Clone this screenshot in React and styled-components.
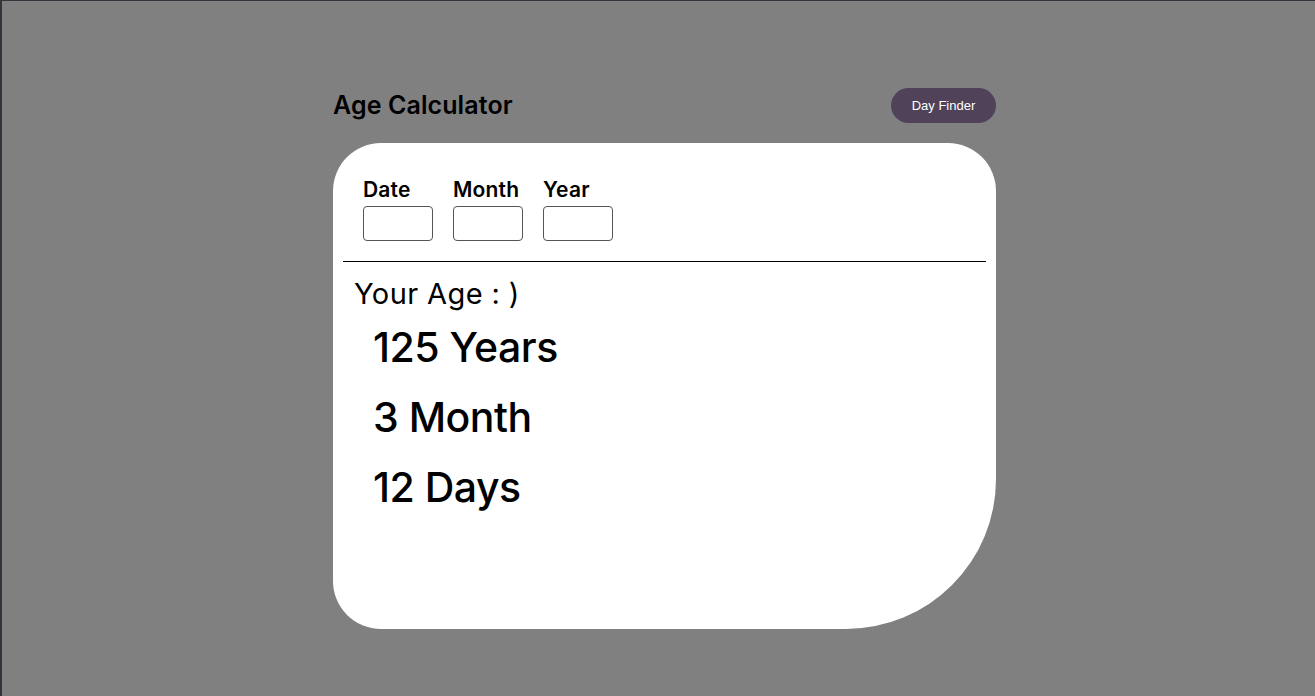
import React from 'react';
import styled, { createGlobalStyle } from 'styled-components';

const GlobalStyle = createGlobalStyle`
  html, body {
    margin: 0;
    padding: 0;
  }
  body {
    background-color: #808080;
    border-left: 2px solid #35333b;
    border-top: 1px solid #35333b;
    min-height: 695px;
    font-family: "Inter", "Open Sans", sans-serif;
  }
`;

const Page = styled.div`
  display: flex;
  flex-direction: column;
  width: 663px;
  margin-left: 331px;
  padding-top: 86px;
`;

const Header = styled.div`
  display: flex;
  align-items: center;
  justify-content: space-between;
  height: 36px;
  margin-bottom: 20px;
`;

const Title = styled.h1`
  margin: 0;
  font-size: 25px;
  font-weight: 600;
  color: #000;
  letter-spacing: 0.1px;
`;

const FinderButton = styled.button`
  width: 105px;
  height: 35px;
  border: none;
  border-radius: 18px;
  background-color: #4f4259;
  color: #fff;
  font-family: "Liberation Sans", Arial, sans-serif;
  font-size: 13px;
`;

const Card = styled.div`
  background: #fff;
  height: 486px;
  border-radius: 48px 48px 150px 48px;
  padding: 33px 10px 0 10px;
  box-sizing: border-box;
`;

const Fields = styled.div`
  display: flex;
  gap: 20px;
  padding-left: 20px;
  padding-bottom: 20px;
  border-bottom: 1px solid #000;
`;

const Field = styled.label`
  display: flex;
  flex-direction: column;
  gap: 2px;
`;

const FieldName = styled.span`
  font-size: 21px;
  font-weight: 600;
  color: #000;
  letter-spacing: 0.2px;
  line-height: 28px;
  white-space: nowrap;
`;

const Input = styled.input`
  width: 70px;
  height: 35px;
  box-sizing: border-box;
  border: 1px solid #555;
  border-radius: 4px;
  background: #fff;
`;

const AgeLabel = styled.p`
  margin: 14px 0 0 11px;
  font-size: 29px;
  font-weight: 400;
  line-height: 36px;
  color: #000;
  letter-spacing: 0.4px;
`;

const Results = styled.div`
  display: flex;
  flex-direction: column;
  padding-left: 30px;
`;

const ResultLine = styled.span`
  font-size: 41px;
  font-weight: 500;
  line-height: 70px;
  color: #000;
  letter-spacing: -0.5px;
`;

const fields = ['Date', 'Month', 'Year'];
const results = ['125 Years', '3 Month', '12 Days'];

const App = () => {
  return (
    <>
      <GlobalStyle />
      <Page>
        <Header>
          <Title>Age Calculator</Title>
          <FinderButton>Day Finder</FinderButton>
        </Header>
        <Card>
          <Fields>
            {fields.map((f) => (
              <Field key={f}>
                <FieldName>{f}</FieldName>
                <Input type="text" />
              </Field>
            ))}
          </Fields>
          <AgeLabel>Your Age : )</AgeLabel>
          <Results>
            {results.map((r) => (
              <ResultLine key={r}>{r}</ResultLine>
            ))}
          </Results>
        </Card>
      </Page>
    </>
  );
};

export default App;
